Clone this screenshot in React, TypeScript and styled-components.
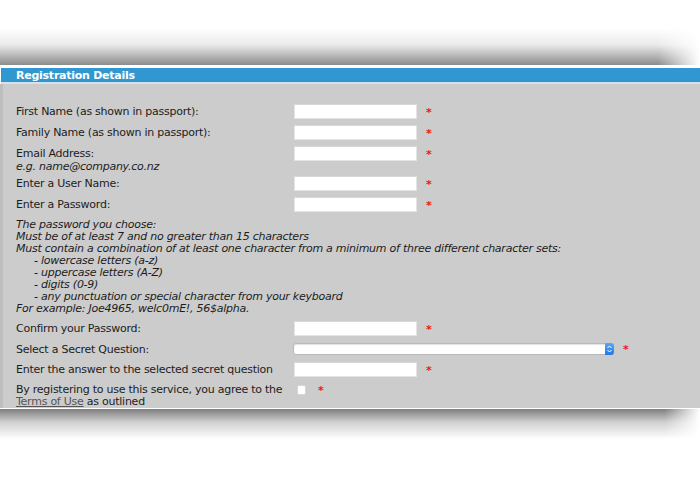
import React from 'react';
import styled, { createGlobalStyle } from 'styled-components';

const GlobalStyle = createGlobalStyle`
  html, body {
    margin: 0;
    padding: 0;
    background: #ffffff;
  }
  body {
    font-family: 'DejaVu Sans', Verdana, sans-serif;
    font-size: 11px;
    letter-spacing: -0.25px;
    color: #1c1c1c;
  }
`;

const Page = styled.div`
  width: 700px;
  height: 480px;
  padding-top: 28px;
  box-sizing: border-box;
  overflow: hidden;
`;

// sombra del bloque de arriba (recortado)
const TopShade = styled.div`
  height: 37px;
  background: linear-gradient(to bottom, rgba(0, 0, 0, 0) 0%, rgba(0, 0, 0, 0.08) 45%, rgba(0, 0, 0, 0.45) 100%);
  -webkit-mask-image: linear-gradient(to right, #000 0%, #000 94%, transparent 100%);
  mask-image: linear-gradient(to right, #000 0%, #000 94%, transparent 100%);
`;

const BottomShade = styled.div`
  height: 30px;
  background: linear-gradient(to bottom, rgba(0, 0, 0, 0.5) 0%, rgba(0, 0, 0, 0.18) 45%, rgba(0, 0, 0, 0) 100%);
  -webkit-mask-image: linear-gradient(to right, #000 0%, #000 95%, transparent 100%);
  mask-image: linear-gradient(to right, #000 0%, #000 95%, transparent 100%);
`;

const Panel = styled.section`
  margin-top: 3px;
  border-bottom: 1px solid #ffffff;
`;

const TitleBar = styled.header`
  height: 14px;
  margin-left: 1px;
  padding-left: 15px;
  background: #3097d1;
  border-bottom: 2px solid #cfe3f0;
  color: #ffffff;
  font-weight: bold;
  font-size: 11px;
  line-height: 15px;
`;

const FormBody = styled.div`
  background: #cccccc;
  border-left: 3px solid #bebebe;
  padding: 20px 0 1px 13px;
  display: flex;
  flex-direction: column;
  gap: 6px;
`;

const Row = styled.div<{ $tight?: boolean }>`
  display: grid;
  grid-template-columns: 278px 1fr;
  align-items: start;
  margin-bottom: ${p => (p.$tight ? '-3px' : '0')};
`;

const Label = styled.div<{ $lh?: number }>`
  line-height: ${p => p.$lh ?? 13}px;
  padding-top: 1px;
`;

const Hint = styled.div`
  font-style: italic;
`;

const Field = styled.div<{ $gap?: number; $h?: number }>`
  display: flex;
  align-items: center;
  gap: ${p => p.$gap ?? 9}px;
  height: ${p => p.$h ?? 15}px;
`;

const TextBox = styled.input`
  width: 123px;
  height: 15px;
  box-sizing: border-box;
  border: 1px solid #e4e4e4;
  border-top-color: #d8d8d8;
  background: #ffffff;
  margin: 0;
  padding: 0 3px;
  font: inherit;
`;

const Required = styled.span`
  color: #f01818;
  font-weight: bold;
  font-size: 11px;
  line-height: 1;
  position: relative;
  top: 1px;
`;

const Notes = styled.div`
  font-style: italic;
  line-height: 12px;
  margin-top: 1px;
`;

const Indent = styled.div`
  padding-left: 18px;
`;

const SelectBox = styled.div`
  width: 321px;
  height: 12px;
  box-sizing: border-box;
  margin-left: -1px;
  border: 1px solid #b9b9b9;
  border-radius: 3px;
  background: #ffffff;
  box-shadow: inset 0 1px 1px rgba(0, 0, 0, 0.12);
  display: flex;
  justify-content: flex-end;
`;

const SelectArrows = styled.span`
  width: 9px;
  height: 12px;
  margin: -1px -1px 0 0;
  border-radius: 0 3px 3px 0;
  background: linear-gradient(to bottom, #5aa8f5, #1f78e8);
  display: flex;
  align-items: center;
  justify-content: center;
`;

const CheckBox = styled.span`
  width: 7px;
  height: 8px;
  margin-left: 3px;
  border: 1px solid #d6d6d6;
  border-radius: 2px;
  background: #ffffff;
`;

const TermsLink = styled.a`
  color: #555555;
  text-decoration: underline;
`;

const simpleRows = [
  'First Name (as shown in passport):',
  'Family Name (as shown in passport):',
];

const App: React.FC = () => {
  return (
    <Page>
      <GlobalStyle />
      <TopShade />
      <Panel>
        <TitleBar>Registration Details</TitleBar>
        <FormBody>
          {simpleRows.map(label => (
            <Row key={label}>
              <Label>{label}</Label>
              <Field>
                <TextBox type="text" />
                <Required>*</Required>
              </Field>
            </Row>
          ))}
          <Row $tight>
            <Label>
              Email Address:
              <Hint>e.g. name@company.co.nz</Hint>
            </Label>
            <Field>
              <TextBox type="text" />
              <Required>*</Required>
            </Field>
          </Row>
          <Row>
            <Label>Enter a User Name:</Label>
            <Field>
              <TextBox type="text" />
              <Required>*</Required>
            </Field>
          </Row>
          <Row>
            <Label>Enter a Password:</Label>
            <Field>
              <TextBox type="password" />
              <Required>*</Required>
            </Field>
          </Row>
          <Notes>
            <div>The password you choose:</div>
            <div>Must be of at least 7 and no greater than 15 characters</div>
            <div>Must contain a combination of at least one character from a minimum of three different character sets:</div>
            <Indent>- lowercase letters (a-z)</Indent>
            <Indent>- uppercase letters (A-Z)</Indent>
            <Indent>- digits (0-9)</Indent>
            <Indent>- any punctuation or special character from your keyboard</Indent>
            <div>For example: Joe4965, welc0mE!, 56$alpha.</div>
          </Notes>
          <Row>
            <Label>Confirm your Password:</Label>
            <Field>
              <TextBox type="password" />
              <Required>*</Required>
            </Field>
          </Row>
          <Row>
            <Label>Select a Secret Question:</Label>
            <Field $h={13}>
              <SelectBox>
                <SelectArrows>
                  <svg width="5" height="8" viewBox="0 0 5 8">
                    <path d="M0.5 3 L2.5 1 L4.5 3 M0.5 5 L2.5 7 L4.5 5" fill="none" stroke="#ffffff" strokeWidth="1" />
                  </svg>
                </SelectArrows>
              </SelectBox>
              <Required>*</Required>
            </Field>
          </Row>
          <Row>
            <Label>Enter the answer to the selected secret question</Label>
            <Field>
              <TextBox type="text" />
              <Required>*</Required>
            </Field>
          </Row>
          <Row>
            <Label $lh={11.5}>
              By registering to use this service, you agree to the
              <br />
              <TermsLink href="#">Terms of Use</TermsLink> as outlined
            </Label>
            <Field $gap={12} $h={13}>
              <CheckBox />
              <Required>*</Required>
            </Field>
          </Row>
        </FormBody>
      </Panel>
      <BottomShade />
    </Page>
  );
};

export default App;
